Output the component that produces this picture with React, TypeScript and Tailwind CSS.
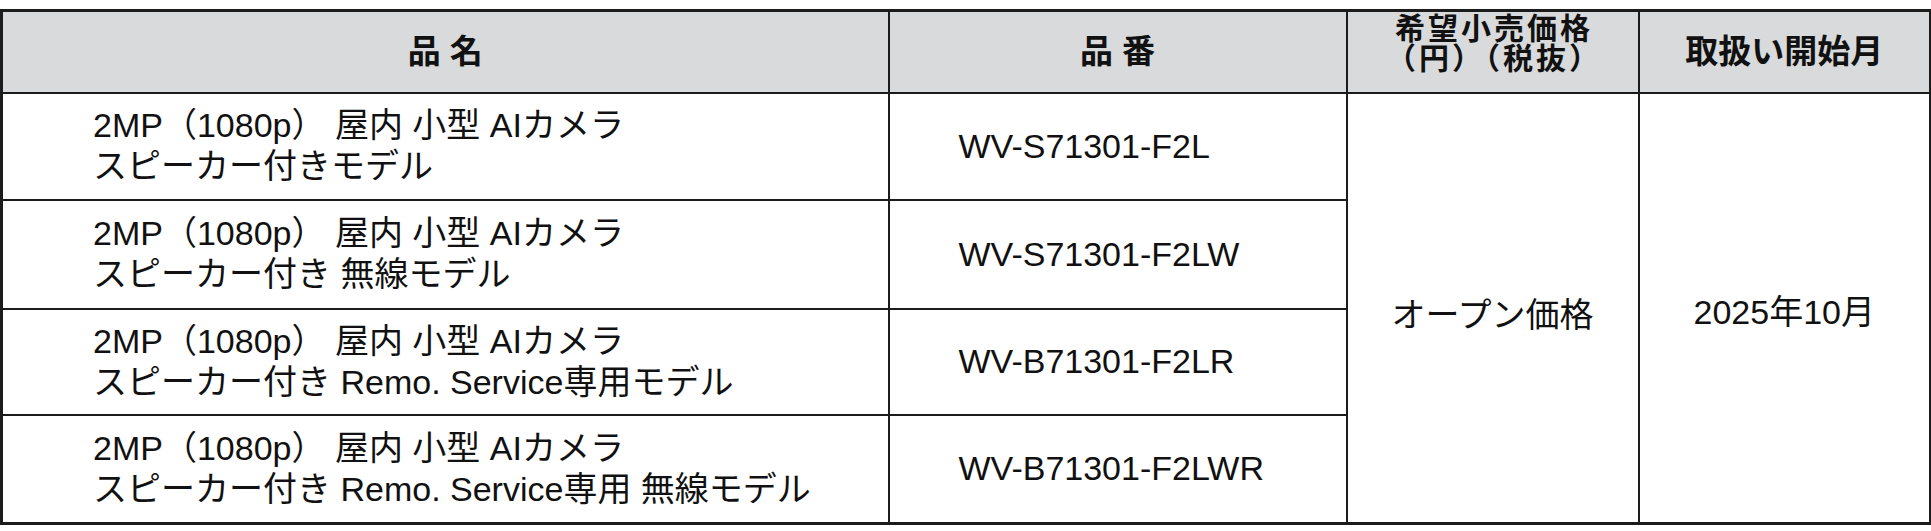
const rows = [
  { line1: "2MP（1080p） 屋内 小型 AIカメラ", line2: "スピーカー付きモデル", model: "WV-S71301-F2L", h: "h-[107px]" },
  { line1: "2MP（1080p） 屋内 小型 AIカメラ", line2: "スピーカー付き 無線モデル", model: "WV-S71301-F2LW", h: "h-[109px]" },
  { line1: "2MP（1080p） 屋内 小型 AIカメラ", line2: "スピーカー付き Remo. Service専用モデル", model: "WV-B71301-F2LR", h: "h-[106px]" },
  { line1: "2MP（1080p） 屋内 小型 AIカメラ", line2: "スピーカー付き Remo. Service専用 無線モデル", model: "WV-B71301-F2LWR", h: "h-[109px]" },
];

export default function App() {
  return (
    <div className="w-[1931px] h-[531px] bg-white pt-[9px] font-['Liberation_Sans','Noto_Sans_CJK_JP',sans-serif] text-[#111]">
      <table className="w-[1929px] table-fixed border-collapse border-[3px] border-[#1c1c1c]">
        <colgroup>
          <col className="w-[887px]" />
          <col className="w-[458px]" />
          <col className="w-[292px]" />
          <col className="w-[292px]" />
        </colgroup>
        <thead>
          <tr className="h-[82px] bg-[#d9dadb] font-bold text-[33px]">
            <th className="border-2 border-[#1c1c1c] text-center align-middle font-bold">品 名</th>
            <th className="border-2 border-[#1c1c1c] text-center align-middle font-bold">品 番</th>
            <th className="border-2 border-[#1c1c1c] text-center align-top font-bold text-[30px] leading-[30px] tracking-[3px] pl-[3px] pt-[2px]">
              <div>希望小売価格</div>
              <div>（円）（税抜）</div>
            </th>
            <th className="border-2 border-[#1c1c1c] text-center align-middle font-bold">取扱い開始月</th>
          </tr>
        </thead>
        <tbody className="text-[34px]">
          {rows.map((r, i) => (
            <tr key={r.model} className={r.h}>
              <td className="border-2 border-[#1c1c1c] pl-[90px] align-middle leading-[41px]">
                <div>{r.line1}</div>
                <div>{r.line2}</div>
              </td>
              <td className="border-2 border-[#1c1c1c] pl-[69px] align-middle">{r.model}</td>
              {i === 0 && (
                <>
                  <td rowSpan={4} className="border-2 border-[#1c1c1c] text-center align-middle pt-[16px]">
                    オープン価格
                  </td>
                  <td rowSpan={4} className="border-2 border-[#1c1c1c] text-center align-middle pt-[10px]">
                    2025年10月
                  </td>
                </>
              )}
            </tr>
          ))}
        </tbody>
      </table>
    </div>
  );
}
